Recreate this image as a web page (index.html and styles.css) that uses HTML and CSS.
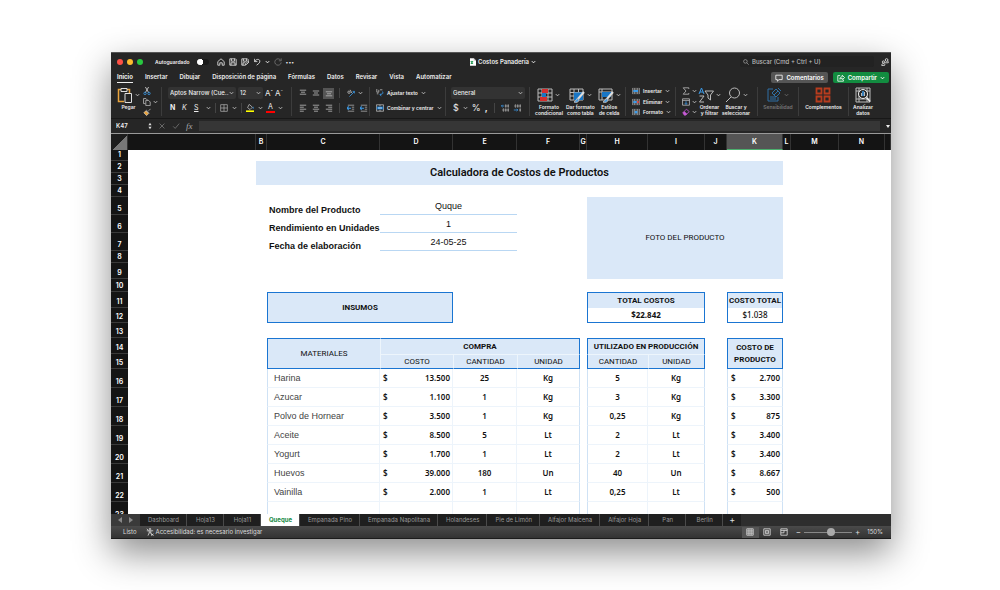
FILE: index.html
```html
<!DOCTYPE html>
<html lang="es">
<head>
    <meta charset="UTF-8">
    <meta name="viewport" content="width=device-width, initial-scale=1.0">
    <title>Costos Panadería</title>
    <link rel="stylesheet" href="styles.css">
</head>
<body>
    <svg class="defs" aria-hidden="true">
        <symbol id="chev" viewBox="0 0 6 4"><path d="M1 1l2 2 2-2" fill="none" stroke="currentColor" stroke-width="1.2"/></symbol>
        <symbol id="top" viewBox="0 0 10 10"><path d="M1 1.5h8M2.5 4h5M1 6.5h8" stroke="currentColor"/></symbol>
        <symbol id="middle" viewBox="0 0 10 10"><path d="M1 2.5h8M2.5 5h5M1 7.5h8" stroke="currentColor"/></symbol>
        <symbol id="bottom" viewBox="0 0 10 10"><path d="M1 3.5h8M2.5 6h5M1 8.5h8" stroke="currentColor"/></symbol>
        <symbol id="left" viewBox="0 0 10 10"><path d="M1 1.5h8M1 4h5M1 6.5h8M1 9h5" stroke="currentColor"/></symbol>
        <symbol id="center" viewBox="0 0 10 10"><path d="M1 1.5h8M2.5 4h5M1 6.5h8M2.5 9h5" stroke="currentColor"/></symbol>
        <symbol id="right" viewBox="0 0 10 10"><path d="M1 1.5h8M4 4h5M1 6.5h8M4 9h5" stroke="currentColor"/></symbol>
        <symbol id="indent" viewBox="0 0 10 10"><path d="M1 1.5h8M6 4h3M6 6.5h3M1 9h8" stroke="#aaa"/><path d="M0 5.2h5M2 3L.2 5.2 2 7.400" stroke="#3c9be8" stroke-width="1.3" fill="none"/></symbol>
        <symbol id="grid" viewBox="0 0 12 12"><path d="M1 1h10v10H1zM6 1v10M1 6h10" fill="none" stroke="currentColor"/></symbol>
        <symbol id="cells" viewBox="0 0 12 10"><path d="M.5.5h11v9H.5zM4 .5v9M8 .5v9M.5 3.5h11M.5 6.5h11" fill="none" stroke="#aaa"/></symbol>
    </svg>

    <div class="window">
        <header class="titlebar">
            <div class="title-left">
                <span class="dot red"></span><span class="dot yellow"></span><span class="dot green"></span>
                <label class="autosave">Autoguardado <input type="checkbox"></label>
                <button aria-label="Inicio"><svg viewBox="0 0 10 10"><path d="M1 4.5L5 1l4 3.500V9H6.500V6h-3v3H1z"/></svg></button>
                <button aria-label="Guardar"><svg viewBox="0 0 10 10"><path d="M1 1h7l1 1v7H1zM3 1v3h4V1M2.500 9V6h5v3"/></svg></button>
                <button aria-label="Guardar como"><svg viewBox="0 0 10 10"><path d="M5 9H1V1h7l1 1v2M3 1v3h4V1M2.500 9V6h3M5.500 9l.5-2 3-3 1 1-3 3z"/></svg></button>
                <button aria-label="Deshacer"><svg viewBox="0 0 10 10"><path d="M2 1v3.500h3.500M2 4.500C4 1 8 1 8.500 3.500S7 7 4.500 9"/></svg></button>
                <svg class="chev"><use href="#chev"/></svg>
                <button class="dim" aria-label="Rehacer"><svg viewBox="0 0 10 10"><path d="M8.500 3A4 4 0 1 0 9 5.500M9 .5V3.500H6"/></svg></button>
                <button class="more" aria-label="Más">•••</button>
            </div>
            <div class="doc-name">
                <svg class="doc" viewBox="0 0 8 10"><path d="M0 0h5l3 3v7H0z" fill="#fff"/><path d="M5 0v3h3" fill="#bbb"/><path d="M1 4l3 3M4 4L1 7" stroke="#239a55" stroke-width="1.5"/></svg>
                Costos Panadería <svg class="chev"><use href="#chev"/></svg>
            </div>
            <div class="title-right">
                <label class="search">
                    <svg viewBox="0 0 10 10"><circle cx="4" cy="4" r="3"/><path d="M6.2 6.2L9.500 9.500"/></svg>
                    <input type="text" placeholder="Buscar (Cmd + Ctrl + U)" aria-label="Buscar">
                </label>
                <svg class="people" viewBox="0 0 10 10"><circle cx="7" cy="2.5" r="1.7"/><circle cx="3" cy="5" r="1.4"/><path d="M4.500 6h4.500c1-1 0-2-1-2M1 9.500c-1-3 4-3 4-1 0 1-1.500 1-4 1z"/></svg>
            </div>
        </header>

        <div class="tabs-row">
            <nav class="tabs">
                <a href="#" class="active">Inicio</a>
                <a href="#">Insertar</a>
                <a href="#">Dibujar</a>
                <a href="#">Disposición de página</a>
                <a href="#">Fórmulas</a>
                <a href="#">Datos</a>
                <a href="#">Revisar</a>
                <a href="#">Vista</a>
                <a href="#">Automatizar</a>
            </nav>
            <button class="pill"><svg viewBox="0 0 10 10"><path d="M1 1.500h8v5.500H5L3 9V7H1z"/></svg>Comentarios</button>
            <button class="pill share"><svg viewBox="0 0 10 10"><path d="M4 2H1v7h7V7M3.500 6.500c0-2.500 1.500-3 3-3V1.500L9.500 4.500 6.500 7V5.300c-1 0-2 .2-3 1.200z"/></svg>Compartir<svg class="chev"><use href="#chev"/></svg></button>
        </div>

        <div class="ribbon">
            <div class="group paste">
                <button class="big">
                    <span class="art"><svg class="icon-l" viewBox="0 0 16 16"><path d="M10 2.500h2.500V6M7 14.500H1.500v-12H4" fill="none" stroke="#e8a33d" stroke-width="1.5"/><path d="M4 1.500h6v3H4z" fill="#262626" stroke="#ddd"/><path d="M8 6.500h6.500v9H8z" fill="#262626" stroke="#ddd"/></svg><svg class="chev"><use href="#chev"/></svg></span>
                    Pegar
                </button>
                <div class="stack">
                    <button aria-label="Cortar"><svg viewBox="0 0 10 10"><path d="M3 0l4 7M7 0L3 7" stroke="#ddd"/><circle cx="2.5" cy="8" r="1.5" stroke="#3c9be8"/><circle cx="7.5" cy="8" r="1.5" stroke="#3c9be8"/></svg></button>
                    <button aria-label="Copiar"><svg viewBox="0 0 10 10"><path d="M3 7H.7V.7h3L6 3M3.500 3h3.500l2 2v4.500H3.500z"/></svg><svg class="chev"><use href="#chev"/></svg></button>
                    <button aria-label="Copiar formato"><svg viewBox="0 0 10 10"><path d="M9.500 1L7 3.500M4 2.500L8 6.500"/><path d="M3.500 3.500L1 6l3.500 3.500L7 7z" fill="#e8a33d" stroke="#fff" stroke-width=".6"/></svg></button>
                </div>
            </div>

            <div class="group font-group">
                <div class="line">
                    <label class="picker font-name"><select aria-label="Fuente"><option>Aptos Narrow (Cue...</option></select><svg class="chev"><use href="#chev"/></svg></label>
                    <label class="picker font-size"><select aria-label="Tamaño"><option>12</option></select><svg class="chev"><use href="#chev"/></svg></label>
                    <button class="letter" aria-label="Aumentar fuente">A<sup>ˆ</sup></button>
                    <button class="letter" aria-label="Reducir fuente">A<sup>ˇ</sup></button>
                </div>
                <div class="line marks">
                    <button><b>N</b></button>
                    <button><i>K</i></button>
                    <button><u>S</u></button><svg class="chev"><use href="#chev"/></svg>
                    <span class="bar"></span>
                    <button aria-label="Bordes"><svg><use href="#grid"/></svg></button><svg class="chev"><use href="#chev"/></svg>
                    <span class="bar"></span>
                    <button aria-label="Relleno"><svg viewBox="0 0 10 10"><path d="M4 .5l4 3.500L5 7 2 4.500z"/><path d="M9 3.500v2.500" stroke="#3c9be8"/><path d="M0 9h10" stroke="#ff0" stroke-width="2"/></svg></button><svg class="chev"><use href="#chev"/></svg>
                    <button class="ink">A</button><svg class="chev"><use href="#chev"/></svg>
                </div>
            </div>

            <div class="group align-group">
                <div class="line">
                    <button aria-label="Arriba"><svg><use href="#top"/></svg></button>
                    <button aria-label="Medio"><svg><use href="#middle"/></svg></button>
                    <button class="on" aria-label="Abajo"><svg><use href="#bottom"/></svg></button>
                    <span class="bar"></span>
                    <button aria-label="Orientación"><svg viewBox="0 0 10 10"><circle cx="2.5" cy="4" r="1.5"/><path d="M4 1l2 4"/><path d="M3 9.500l6-6M9.500 5.500V3h-2.500" stroke="#3c9be8"/></svg></button><svg class="chev"><use href="#chev"/></svg>
                </div>
                <div class="line">
                    <button aria-label="Izquierda"><svg><use href="#left"/></svg></button>
                    <button aria-label="Centro"><svg><use href="#center"/></svg></button>
                    <button aria-label="Derecha"><svg><use href="#right"/></svg></button>
                    <span class="bar"></span>
                    <button aria-label="Reducir sangría"><svg><use href="#indent"/></svg></button>
                    <button aria-label="Aumentar sangría"><svg><use href="#indent"/></svg></button>
                </div>
            </div>

            <div class="group wrap-group">
                <button><svg viewBox="0 0 10 10"><path d="M1 0v4M3.500 1v3H1M5 1h3M1 6h2"/><path d="M7.500 3c2 1 1.500 4-2.500 4M6.500 5.500L5 7l1.500 2" stroke="#3c9be8"/></svg>Ajustar texto<svg class="chev"><use href="#chev"/></svg></button>
                <button><svg viewBox="0 0 10 10"><path d="M.5 1h9v8h-9zM5 1v2M5 7v2"/><path d="M1 3.200h8v3.600H1z" fill="#1976c5" stroke="none"/><path d="M2.500 5h5" stroke="#fff"/></svg>Combinar y centrar<svg class="chev"><use href="#chev"/></svg></button>
            </div>

            <div class="group number-group">
                <label class="picker"><select aria-label="Formato de número"><option>General</option></select><svg class="chev"><use href="#chev"/></svg></label>
                <div class="line">
                    <button>$</button><svg class="chev"><use href="#chev"/></svg>
                    <button>%</button>
                    <button class="comma">,</button>
                    <span class="bar"></span>
                    <button aria-label="Más decimales"><svg viewBox="0 0 10 10"><path d="M5.500 1h1v3h-1zM8.500 1h1v3h-1zM2.500 6h1v3h-1zM5.500 6h1v3h-1zM8.500 6h1v3h-1z" stroke-width=".8"/><path d="M4 2.500H.5M2 1L.5 2.500 2 4" stroke="#3c9be8"/></svg></button>
                    <button aria-label="Menos decimales"><svg viewBox="0 0 10 10"><path d="M2.500 1h1v3h-1zM5.500 1h1v3h-1zM8.500 1h1v3h-1zM8.500 6h1v3h-1z" stroke-width=".8"/><path d="M1 7.500h5M4.500 6L6 7.500 4.500 9" stroke="#3c9be8"/></svg></button>
                </div>
            </div>

            <div class="group styles-group">
                <button class="big"><span class="art"><svg class="icon-l" viewBox="0 0 16 16"><path d="M1 2h14v12H1zM5 2v12M11 2v12M1 6h14M1 10h14"/><path d="M5 2h6v4H5zM3 10h7v4H3z" fill="#d42f2f" stroke="none"/><path d="M5 6h4v4H5z" fill="#1976c5" stroke="none"/></svg><svg class="chev"><use href="#chev"/></svg></span>Formato<br>condicional</button>
                <button class="big"><span class="art"><svg class="icon-l" viewBox="0 0 16 16"><path d="M1 2h13v11H1zM5 2v11M9.500 2v11M1 5.500h13M1 9h13"/><path d="M5 5.500h9V13H5z" fill="#1976c5" stroke="none"/><path d="M15 5L8 13" stroke="#ddd" stroke-width="2"/><path d="M9 11.500c-2 0-2 3-4 3.500 2 1 5 0 5-2z" fill="#3c9be8"/></svg><svg class="chev"><use href="#chev"/></svg></span>Dar formato<br>como tabla</button>
                <button class="big"><span class="art"><svg class="icon-l" viewBox="0 0 16 16"><path d="M1 2h13v11H1zM1 5h13M4 2v11"/><path d="M4 5h9v5H4z" fill="#1976c5" stroke="none"/><path d="M15 5L8 13" stroke="#ddd" stroke-width="2"/><path d="M9 11.500c-2 0-2 3-4 3.500 2 1 5 0 5-2z" fill="#3c9be8"/></svg><svg class="chev"><use href="#chev"/></svg></span>Estilos<br>de celda</button>
            </div>

            <div class="group cells-group">
                <button><svg viewBox="0 0 12 10"><use href="#cells"/><path d="M2 3.500h7v3H2z" fill="#3c9be8" stroke="none"/></svg>Insertar<svg class="chev"><use href="#chev"/></svg></button>
                <button><svg viewBox="0 0 12 10"><use href="#cells"/><path d="M2 3.500h5v3H2z" fill="#3c9be8" stroke="none"/><path d="M7 3l4 4M11 3L7 7" stroke="#f33"/></svg>Eliminar<svg class="chev"><use href="#chev"/></svg></button>
                <button><svg viewBox="0 0 12 10"><use href="#cells"/><path d="M4 3.500h4v3.500H4z" fill="#3c9be8" stroke="none"/></svg>Formato<svg class="chev"><use href="#chev"/></svg></button>
            </div>

            <div class="group edit-group">
                <div class="stack">
                    <button aria-label="Autosuma"><svg viewBox="0 0 10 10"><path d="M8.500 2.500V1H1.500L5 5 1.500 9h7V7.500"/></svg><svg class="chev"><use href="#chev"/></svg></button>
                    <button aria-label="Rellenar"><svg viewBox="0 0 10 10"><path d="M.7 1h8.600v8H.7zM.7 3h8.600"/><path d="M5 4v4M3.500 6.500L5 8l1.500-1.500" stroke="#3c9be8"/></svg><svg class="chev"><use href="#chev"/></svg></button>
                    <button aria-label="Borrar"><svg viewBox="0 0 10 10"><path d="M1 6l4.500-4.500L9 4.500 4.500 9H3z" stroke="#c75bd6"/><path d="M1 6l2-2 3.500 3.500L4.500 9H3z" fill="#c75bd6" stroke="none"/></svg><svg class="chev"><use href="#chev"/></svg></button>
                </div>
                <button class="big"><span class="art"><svg class="icon-l" viewBox="0 0 16 16"><path d="M1 7l2.500-6L6 7M2 5h3" stroke="#3c9be8"/><path d="M1.500 9H6l-4.500 6H6M7 4h8.500L12.500 8v5L10 11V8z"/></svg><svg class="chev"><use href="#chev"/></svg></span>Ordenar<br>y filtrar</button>
                <button class="big"><span class="art"><svg class="icon-l" viewBox="0 0 16 16"><circle cx="9.5" cy="6" r="5"/><path d="M6 10L1 15"/></svg><svg class="chev"><use href="#chev"/></svg></span>Buscar y<br>seleccionar</button>
            </div>

            <div class="group single dim"><button class="big" disabled><span class="art"><svg class="icon-l" viewBox="0 0 16 16"><path d="M7 2H2v12h10v-4M4 10h6M4 12h6" stroke="#2f6fa5"/><path d="M6 6l4-4 4 4-4 4zM12 1l3 3M8 8l4-4" stroke="#2f6fa5"/></svg><svg class="chev"><use href="#chev"/></svg></span>Sensibilidad</button></div>
            <div class="group single addins"><button class="big"><span class="art"><svg class="icon-l" viewBox="0 0 16 16"><path d="M1.500 1.500h5v5h-5zM9.500 1.500h5v5h-5zM1.500 9.500h5v5h-5zM9.500 9.500h5v5h-5z" stroke="#b83c1e" stroke-width="1.8"/></svg></span>Complementos</button></div>
            <div class="group single last"><button class="big"><span class="art"><svg class="icon-l" viewBox="0 0 16 16"><path d="M1 1h14v14H1zM1 4h14M4 1v14M1 12h14M12 1v14"/><circle cx="8" cy="7" r="4.5" fill="#262626" stroke="#eee"/><path d="M11.500 10.500L15 14.500" stroke="#eee" stroke-width="1.5"/><path d="M6.500 9V6M9.500 9V5"/><path d="M8 9V4" stroke="#3c9be8" stroke-width="1.5"/></svg></span>Analizar<br>datos</button></div>
        </div>

        <div class="formula-bar">
            <input class="name-box" type="text" value="K47" aria-label="Cuadro de nombres">
            <svg class="stepper" viewBox="0 0 4 10"><path d="M0 4l2-3 2 3zM0 6l2 3 2-3z" fill="#ddd"/></svg>
            <button class="dim" aria-label="Cancelar"><svg viewBox="0 0 10 10"><path d="M2 2l6 6M8 2L2 8"/></svg></button>
            <button class="dim" aria-label="Aceptar"><svg viewBox="0 0 10 10"><path d="M1.500 5.500L4 8l5-6"/></svg></button>
            <button class="fx">fx</button>
            <input class="formula" type="text" aria-label="Barra de fórmulas">
            <svg class="drop" viewBox="0 0 4 3"><path d="M0 0h4L2 3z" fill="#eee"/></svg>
        </div>

        <div class="sheet">
            <table>
                <colgroup>
                    <col class="c-num"><col class="c-a"><col class="c-b"><col class="c-c"><col class="c-d"><col class="c-e"><col class="c-f"><col class="c-g"><col class="c-h"><col class="c-i"><col class="c-j"><col class="c-k"><col class="c-l"><col class="c-m"><col class="c-n"><col>
                </colgroup>
                <thead>
                    <tr><th class="corner"></th><th></th><th>B</th><th>C</th><th>D</th><th>E</th><th>F</th><th>G</th><th>H</th><th>I</th><th>J</th><th class="selected">K</th><th>L</th><th>M</th><th>N</th><th></th></tr>
                </thead>
                <tbody>
                    <tr class="h11"><th>1</th><td colspan="15"></td></tr>
                    <tr class="h12"><th>2</th><td></td><td class="title" colspan="10" rowspan="2">Calculadora de Costos de Productos</td><td colspan="4"></td></tr>
                    <tr class="h12"><th>3</th><td></td><td colspan="4"></td></tr>
                    <tr class="h12"><th>4</th><td colspan="15"></td></tr>
                    <tr class="h18"><th>5</th><td colspan="2"></td><td class="label">Nombre del Producto</td><td class="value" colspan="2">Quque</td><td colspan="2"></td><td class="photo" colspan="4" rowspan="5">FOTO DEL PRODUCTO</td><td colspan="4"></td></tr>
                    <tr class="h18"><th>6</th><td colspan="2"></td><td class="label">Rendimiento en Unidades</td><td class="value" colspan="2">1</td><td colspan="2"></td><td colspan="4"></td></tr>
                    <tr class="h18"><th>7</th><td colspan="2"></td><td class="label">Fecha de elaboración</td><td class="value" colspan="2">24-05-25</td><td colspan="2"></td><td colspan="4"></td></tr>
                    <tr class="h12"><th>8</th><td colspan="7"></td><td colspan="4"></td></tr>
                    <tr class="h16"><th>9</th><td colspan="7"></td><td colspan="4"></td></tr>
                    <tr class="h13"><th>10</th><td colspan="15"></td></tr>
                    <tr class="h16"><th>11</th><td colspan="2"></td><td class="head box" colspan="2" rowspan="2">INSUMOS</td><td colspan="3"></td><td class="head box-top" colspan="2">TOTAL COSTOS</td><td></td><td class="head box-top">COSTO TOTAL</td><td colspan="4"></td></tr>
                    <tr class="h15"><th>12</th><td colspan="2"></td><td colspan="3"></td><td class="total box-bottom" colspan="2">$22.842</td><td></td><td class="total plain box-bottom">$1.038</td><td colspan="4"></td></tr>
                    <tr class="h15"><th>13</th><td colspan="15"></td></tr>
                    <tr class="h16"><th>14</th><td colspan="2"></td><td class="head light bl bt bb" rowspan="2">MATERIALES</td><td class="head bt br in-l" colspan="3">COMPRA</td><td></td><td class="head box-top" colspan="2">UTILIZADO EN PRODUCCIÓN</td><td></td><td class="head box two" rowspan="2">COSTO DE PRODUCTO</td><td colspan="4"></td></tr>
                    <tr class="h15"><th>15</th><td colspan="2"></td><td class="head light bb in-l in-t">COSTO</td><td class="head light bb in-l in-t">CANTIDAD</td><td class="head light bb br in-l in-t">UNIDAD</td><td></td><td class="head light bl bb in-t">CANTIDAD</td><td class="head light bb br in-l in-t">UNIDAD</td><td></td><td colspan="4"></td></tr>
                    <tr class="item"><th>16</th><td colspan="2"></td><td class="name">Harina</td><td class="money"><div><span>$</span><span>13.500</span></div></td><td class="num">25</td><td class="num end">Kg</td><td></td><td class="num start">5</td><td class="num end">Kg</td><td></td><td class="money start end"><div><span>$</span><span>2.700</span></div></td><td colspan="4"></td></tr>
                    <tr class="item"><th>17</th><td colspan="2"></td><td class="name">Azucar</td><td class="money"><div><span>$</span><span>1.100</span></div></td><td class="num">1</td><td class="num end">Kg</td><td></td><td class="num start">3</td><td class="num end">Kg</td><td></td><td class="money start end"><div><span>$</span><span>3.300</span></div></td><td colspan="4"></td></tr>
                    <tr class="item"><th>18</th><td colspan="2"></td><td class="name">Polvo de Hornear</td><td class="money"><div><span>$</span><span>3.500</span></div></td><td class="num">1</td><td class="num end">Kg</td><td></td><td class="num start">0,25</td><td class="num end">Kg</td><td></td><td class="money start end"><div><span>$</span><span>875</span></div></td><td colspan="4"></td></tr>
                    <tr class="item"><th>19</th><td colspan="2"></td><td class="name">Aceite</td><td class="money"><div><span>$</span><span>8.500</span></div></td><td class="num">5</td><td class="num end">Lt</td><td></td><td class="num start">2</td><td class="num end">Lt</td><td></td><td class="money start end"><div><span>$</span><span>3.400</span></div></td><td colspan="4"></td></tr>
                    <tr class="item"><th>20</th><td colspan="2"></td><td class="name">Yogurt</td><td class="money"><div><span>$</span><span>1.700</span></div></td><td class="num">1</td><td class="num end">Lt</td><td></td><td class="num start">2</td><td class="num end">Lt</td><td></td><td class="money start end"><div><span>$</span><span>3.400</span></div></td><td colspan="4"></td></tr>
                    <tr class="item"><th>21</th><td colspan="2"></td><td class="name">Huevos</td><td class="money"><div><span>$</span><span>39.000</span></div></td><td class="num">180</td><td class="num end">Un</td><td></td><td class="num start">40</td><td class="num end">Un</td><td></td><td class="money start end"><div><span>$</span><span>8.667</span></div></td><td colspan="4"></td></tr>
                    <tr class="item"><th>22</th><td colspan="2"></td><td class="name">Vainilla</td><td class="money"><div><span>$</span><span>2.000</span></div></td><td class="num">1</td><td class="num end">Lt</td><td></td><td class="num start">0,25</td><td class="num end">Lt</td><td></td><td class="money start end"><div><span>$</span><span>500</span></div></td><td colspan="4"></td></tr>
                    <tr class="item"><th>23</th><td colspan="2"></td><td class="name"></td><td class="money"></td><td class="num"></td><td class="num end"></td><td></td><td class="num start"></td><td class="num end"></td><td></td><td class="money start end"></td><td colspan="4"></td></tr>
                </tbody>
            </table>
        </div>

        <nav class="sheet-tabs">
            <span class="arrows"><svg viewBox="0 0 4 6"><path d="M4 0v6L0 3z"/></svg><svg viewBox="0 0 4 6"><path d="M0 0v6l4-3z"/></svg></span>
            <a href="#">Dashboard</a>
            <a href="#">Hoja13</a>
            <a href="#">Hoja11</a>
            <a href="#" class="active">Queque</a>
            <a href="#">Empanada Pino</a>
            <a href="#">Empanada Napolitana</a>
            <a href="#">Holandeses</a>
            <a href="#">Pie de Limón</a>
            <a href="#">Alfajor Maicena</a>
            <a href="#">Alfajor Hoja</a>
            <a href="#">Pan</a>
            <a href="#">Berlin</a>
            <button aria-label="Nueva hoja">+</button>
        </nav>

        <footer class="status">
            <span>Listo</span>
            <span class="access"><svg viewBox="0 0 10 10"><circle cx="5" cy="1.5" r="1"/><path d="M1 3.500h8M4 3.500V6L2.500 9.500M6 3.500V6l1.500 3.500M4 6h2M1 1l2 2M7 7l2.500 2.500M9.500 7L7 9.500"/></svg>Accesibilidad: es necesario investigar</span>
            <div class="views">
                <button class="on" aria-label="Normal"><svg viewBox="0 0 10 10"><path d="M1 1h8v8H1zM3.700 1v8M6.400 1v8M1 3.700h8M1 6.400h8"/></svg></button>
                <button aria-label="Diseño de página"><svg viewBox="0 0 10 10"><path d="M1 1h8v8H1zM3 3h4v4H3zM3 5h4"/></svg></button>
                <button aria-label="Saltos de página"><svg viewBox="0 0 10 10"><path d="M1 9V1h8v8zM1 3h8M5 3v3H1"/></svg></button>
            </div>
            <div class="zoom">
                <button>−</button>
                <input type="range" min="0" max="100" value="58" aria-label="Zoom">
                <button>+</button>
            </div>
            <span class="percent">150%</span>
        </footer>
    </div>
</body>
</html>
```
FILE: styles.css
```css
* {
    box-sizing: border-box;
}

body {
    margin: 0;
    padding: 52px 109px 51px 111px;
    background: #fff;
    font-family: Inter, "Liberation Sans", sans-serif;
    font-size: 6px;
    line-height: 8px;
    color: #eee;
}

.defs {
    display: none;
}

.window {
    background: #262626;
    border-top: 1px solid #555;
    box-shadow: 0 14px 34px rgba(0, 0, 0, 0.45);
}

button,
select,
input {
    margin: 0;
    padding: 0;
    border: none;
    background: none;
    color: inherit;
    font: inherit;
}

button {
    display: flex;
    flex: none;
    align-items: center;
}

svg {
    display: block;
    flex: none;
    width: 8px;
    height: 8px;
    fill: none;
    stroke: currentColor;
}

.chev {
    width: 5px;
    height: 4px;
}

a {
    color: inherit;
    text-decoration: none;
}

/* title bar */
.titlebar {
    display: grid;
    grid-template-columns: 1fr auto 1fr;
    align-items: center;
    height: 17px;
    padding: 0 2px 0 6px;
}

.title-left,
.title-right,
.doc-name {
    display: flex;
    align-items: center;
    gap: 5px;
}

.title-left {
    gap: 4px;
}

.dot {
    width: 6px;
    height: 6px;
}

.red {
    background: #fe5045;
}

.yellow {
    background: #fdbc2e;
}

.green {
    background: #28c840;
    margin-right: 8px;
}

.dot {
    border-radius: 50%;
}

.autosave {
    display: flex;
    align-items: center;
    gap: 7px;
    margin-right: 4px;
    font-size: 5px;
    font-weight: 600;
}

.autosave input {
    appearance: none;
    width: 12px;
    height: 6px;
    border-radius: 3px;
    background: radial-gradient(circle at 3px 3px, #fff 3px, #1a1a1a 3px);
}

.dim {
    color: #777;
}

.more {
    font-size: 5px;
}

.doc-name {
    gap: 2px;
    font-weight: 600;
    font-size: 6px;
}

.doc {
    width: 6px;
    stroke: none;
}

.title-right {
    justify-content: flex-end;
    gap: 7px;
}

.search {
    display: flex;
    align-items: center;
    gap: 3px;
    width: 134px;
    height: 11px;
    padding: 0 3px;
    border-radius: 2px;
    background: #222;
    color: #bbb;
}

.search svg {
    width: 6px;
    height: 6px;
}

.search input {
    flex: 1;
    min-width: 0;
    font-weight: 500;
}

.search input::placeholder {
    color: #bbb;
    opacity: 1;
}

/* ribbon tabs */
.tabs-row {
    display: flex;
    align-items: center;
    gap: 5px;
    height: 15px;
    padding: 0 2px 0 6px;
}

.tabs {
    display: flex;
    flex: 1;
    gap: 12px;
    font-weight: 600;
    white-space: nowrap;
}

.tabs a {
    padding: 1px 0;
    border-bottom: 1px solid transparent;
}

.tabs .active {
    font-weight: 700;
    border-color: #eee;
}

.pill {
    gap: 3px;
    height: 11px;
    padding: 0 4px;
    border-radius: 2px;
    background: #555;
    font-weight: 600;
    color: #fff;
}

.share {
    background: #128c40;
}

/* ribbon */
.ribbon {
    display: flex;
    height: 34px;
    padding: 2px 0;
    border-bottom: 1px solid #181818;
}

.ribbon svg {
    color: #bbb;
}

.ribbon .dim svg {
    color: #666;
}

.group {
    display: flex;
    flex: none;
    gap: 3px;
    padding: 0 4px 0 6px;
    border-right: 1px solid #3c3c3c;
}

.big {
    flex-direction: column;
    font-size: 5px;
    line-height: 6px;
    font-weight: 600;
}

.art {
    display: flex;
    align-items: center;
    gap: 2px;
    margin-bottom: 1px;
}

.icon-l {
    width: 16px;
    height: 16px;
}

.stack {
    display: flex;
    flex-direction: column;
    justify-content: space-between;
}

.stack button {
    gap: 2px;
}

.line {
    display: flex;
    align-items: center;
    gap: 2px;
    height: 12px;
}

.bar {
    width: 1px;
    height: 10px;
    margin: 0 3px;
    background: #444;
}

.picker {
    display: flex;
    align-items: center;
    height: 12px;
    padding: 0 2px;
    background: #333;
    border-radius: 2px;
    font-weight: 500;
}

.picker select {
    flex: 1;
    min-width: 0;
    appearance: none;
}

.paste {
    width: 51px;
}

.font-group,
.align-group,
.wrap-group,
.number-group {
    flex-direction: column;
}

.font-group {
    width: 130px;
}

.font-name {
    width: 68px;
}

.font-size {
    width: 25px;
}

.letter {
    font-size: 8px;
}

.letter sup {
    font-size: 6px;
    line-height: 0;
}

.marks {
    font-size: 7px;
    gap: 3px;
    padding-left: 2px;
}

.marks button {
    min-width: 9px;
}

.marks .bar {
    margin: 0 1px;
}

.ink {
    justify-content: center;
    height: 9px;
    border-bottom: 2px solid #f00;
}

.align-group {
    width: 78px;
    padding: 0 0 0 5px;
}

.align-group button {
    justify-content: center;
    width: 11px;
    height: 11px;
}

.on {
    background: #555;
}

.wrap-group {
    width: 76px;
}

.wrap-group button,
.cells-group button {
    gap: 3px;
    font-size: 5px;
    font-weight: 600;
    white-space: nowrap;
}

.wrap-group button {
    height: 12px;
}

.number-group {
    width: 84px;
    padding-left: 5px;
}

.number-group .line {
    gap: 4px;
    padding-left: 2px;
    font-size: 9px;
}

.number-group .bar {
    margin: 0 2px;
}

.comma {
    font-weight: 700;
}

.styles-group {
    width: 96px;
    gap: 3px;
    padding: 0 2px 0 5px;
}

.cells-group {
    flex-direction: column;
    justify-content: space-between;
    gap: 0;
    width: 50px;
}

.edit-group {
    width: 82px;
    gap: 1px;
    padding-right: 2px;
}

.single {
    justify-content: center;
    width: 41px;
    padding: 0 2px;
}

.addins {
    width: 50px;
}

.last {
    flex: 1;
    padding-right: 16px;
    border: none;
}

/* formula bar */
.formula-bar {
    display: flex;
    align-items: center;
    gap: 6px;
    height: 14px;
    padding: 0 1px 0 5px;
    background: #262626;
}

.name-box {
    width: 26px;
    font-weight: 600;
}

.stepper {
    width: 4px;
    stroke: none;
}

.fx {
    font: italic 9px "Liberation Serif", serif;
    color: #aaa;
}

.formula {
    flex: 1;
    height: 10px;
    background: #363636;
}

.drop {
    width: 4px;
    height: 3px;
    stroke: none;
}

/* sheet */
.sheet {
    height: 381px;
    overflow: hidden;
    border-top: 1px solid #999;
    background: #fff;
    color: #111;
    font-family: "Noto Sans", sans-serif;
    font-size: 8px;
    line-height: 10px;
}

table {
    width: 100%;
    table-layout: fixed;
    border-collapse: separate;
    border-spacing: 0;
}

th,
td {
    padding: 0;
    white-space: nowrap;
}

.c-num { width: 17px; }
.c-a { width: 128px; }
.c-b { width: 11px; }
.c-c { width: 113px; }
.c-d { width: 73px; }
.c-e { width: 64px; }
.c-f { width: 63px; }
.c-g { width: 7px; }
.c-h { width: 61px; }
.c-i { width: 57px; }
.c-j { width: 22px; }
.c-k { width: 56px; }
.c-l { width: 8px; }
.c-m { width: 48px; }
.c-n { width: 46px; }

th {
    background: #141414;
    color: #fff;
    font-family: Inter, sans-serif;
    font-size: 7px;
    font-weight: 600;
}

thead th {
    height: 16px;
    border-right: 1px solid #333;
}

thead .corner {
    background: linear-gradient(135deg, #1c1c1c 55%, #777 55%);
}

thead .selected {
    background: #555;
    border-bottom: 1px solid #4caf6e;
}

tbody th {
    vertical-align: bottom;
    border-bottom: 1px solid #3a3a3a;
}

.h11 { height: 11px; }
.h12 { height: 12px; }
.h13 { height: 13px; }
.h15 { height: 15px; }
.h16 { height: 16px; }
.h18 { height: 18px; }
.item { height: 19px; }

.title {
    background: #dae8f8;
    font-family: Roboto, sans-serif;
    font-size: 11px;
    font-weight: 600;
    text-align: center;
}

.label {
    padding-left: 2px;
    vertical-align: bottom;
    font-family: "Liberation Sans", sans-serif;
    font-size: 9px;
    font-weight: 700;
}

.value {
    border-bottom: 1px solid #b9d7f3;
    font-family: "Liberation Sans", sans-serif;
    font-size: 9px;
    text-align: center;
}

.photo,
.head {
    background: #dae8f8;
    text-align: center;
    font-family: Roboto, sans-serif;
}

.head {
    font-weight: 700;
}

.light {
    font-weight: 400;
}

.total {
    font-weight: 700;
    text-align: center;
}

.plain {
    font-weight: 500;
}

.two {
    white-space: normal;
    line-height: 12px;
}

.box {
    border: 1px solid #1a75d2;
}

.box-top {
    border: 1px solid #1a75d2;
    border-bottom: none;
}

.box-bottom {
    border: 1px solid #1a75d2;
    border-top: none;
}

.bl { border-left: 1px solid #1a75d2; }
.br { border-right: 1px solid #1a75d2; }
.bt { border-top: 1px solid #1a75d2; }
.bb { border-bottom: 1px solid #1a75d2; }
.in-l { border-left: 1px solid #edf5fc; }
.in-t { border-top: 1px solid #edf5fc; }

.name,
.money,
.num {
    border-right: 1px solid #edf4fb;
    border-bottom: 1px solid #edf4fb;
}

.name {
    padding-left: 6px;
    border-left: 1px solid #cfe2f5;
    font-family: "Liberation Sans", sans-serif;
    font-size: 9px;
    color: #444;
}

.money,
.num {
    font-weight: 600;
    text-align: center;
}

.money div {
    display: flex;
    justify-content: space-between;
    padding: 0 2px 0 3px;
}

.start {
    border-left: 1px solid #cfe2f5;
}

.end {
    border-right: 1px solid #cfe2f5;
}

/* sheet tabs */
.sheet-tabs {
    display: flex;
    height: 12px;
    line-height: 12px;
    background: #2e2e2e;
    color: #999;
    white-space: nowrap;
}

.arrows {
    display: flex;
    align-items: center;
    justify-content: center;
    gap: 7px;
    width: 29px;
    background: #3a3a3a;
}

.arrows svg {
    width: 4px;
    height: 6px;
    fill: #888;
    stroke: none;
}

.sheet-tabs a {
    min-width: 37px;
    padding: 0 7px 0 8px;
    border-right: 1px solid #4a4a4a;
    background: #1f1f1f;
    text-align: center;
}

.sheet-tabs .active {
    background: #fff;
    color: #188a45;
    font-weight: 700;
}

.sheet-tabs button {
    justify-content: center;
    width: 18px;
    background: #1f1f1f;
    color: #ddd;
    font-size: 9px;
}

/* status bar */
.status {
    display: flex;
    align-items: center;
    height: 13px;
    padding: 0 8px 0 12px;
    background: linear-gradient(#4a4a4a, #333);
    border-bottom: 1px solid #1c1c1c;
    color: #ddd;
}

.access {
    display: flex;
    align-items: center;
    gap: 2px;
    margin: 0 auto 0 9px;
}

.views {
    display: flex;
    margin-right: 3px;
}

.views button {
    justify-content: center;
    width: 17px;
    height: 11px;
}

.zoom {
    display: flex;
    align-items: center;
    gap: 3px;
    margin-right: 7px;
    font-size: 8px;
}

.zoom input {
    appearance: none;
    width: 48px;
    height: 8px;
    background: linear-gradient(#888, #888) center / 100% 1px no-repeat;
}

.zoom input::-webkit-slider-thumb {
    appearance: none;
    width: 8px;
    height: 8px;
    border-radius: 50%;
    background: #aaa;
}
```
